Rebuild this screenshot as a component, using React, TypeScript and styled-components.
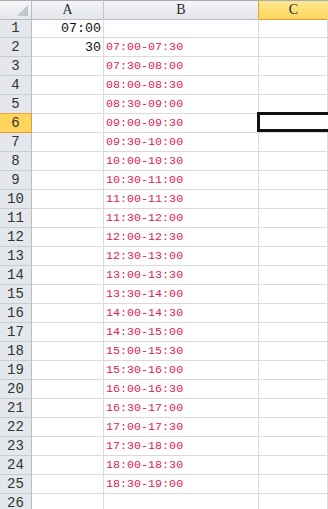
import styled, { createGlobalStyle, css } from "styled-components";

const GlobalStyle = createGlobalStyle`
  html, body {
    margin: 0;
    padding: 0;
    background: #ffffff;
    overflow: hidden;
  }
`;

// Styled components
const Sheet = styled.div`
  display: grid;
  grid-template-columns: 32px 72px 155px 1fr;
  grid-auto-rows: 19px;
  width: 328px;
  height: 509px;
  overflow: hidden;
  font-family: "Liberation Mono", "DejaVu Sans Mono", monospace;
`;

const Corner = styled.div`
  position: relative;
  height: 20px;
  box-sizing: border-box;
  border-top: 1px solid #a9acb1;
  border-right: 1px solid #b9bcc1;
  border-bottom: 1px solid #b9bcc1;
  background: linear-gradient(#f4f5f7, #e4e7eb);

  &::after {
    content: "";
    position: absolute;
    right: 3px;
    bottom: 3px;
    width: 0;
    height: 0;
    border-left: 11px solid transparent;
    border-bottom: 11px solid #c2c5ca;
  }
`;

const ColHeader = styled.div<{ $active?: boolean }>`
  height: 20px;
  box-sizing: border-box;
  display: flex;
  align-items: center;
  justify-content: center;
  border-top: 1px solid #a9acb1;
  border-right: 1px solid #c3c6cb;
  border-bottom: 1px solid #b9bcc1;
  background: linear-gradient(#f4f5f7, #e3e6ea);
  color: #2b2b2b;
  font-family: "Liberation Serif", "DejaVu Serif", serif;
  font-size: 14px;

  ${(p) =>
    p.$active &&
    css`
      margin-left: -1px;
      border-left: 1px solid #f0a33a;
      border-right: none;
      border-bottom: 1px solid #e49a36;
      background: linear-gradient(#fbe68e, #ffd75f);
    `}
`;

const RowHeader = styled.div<{ $active?: boolean }>`
  box-sizing: border-box;
  display: flex;
  align-items: center;
  justify-content: center;
  border-right: 1px solid #b9bcc1;
  border-bottom: 1px solid #c9ccd1;
  background: #e4e7eb;
  color: #333333;
  font-family: "Liberation Mono", "DejaVu Sans Mono", monospace;
  font-size: 14px;

  ${(p) =>
    p.$active &&
    css`
      margin-top: -1px;
      border-top: 1px solid #f0a33a;
      border-right: 1px solid #e49a36;
      border-bottom: 1px solid #e49a36;
      background: #ffd55e;
    `}
`;

const Cell = styled.div<{ $align?: "left" | "right"; $slot?: boolean }>`
  box-sizing: border-box;
  display: flex;
  align-items: center;
  justify-content: ${(p) => (p.$align === "right" ? "flex-end" : "flex-start")};
  padding: 0 2px;
  border-right: 1px solid #dadada;
  border-bottom: 1px solid #dadada;
  white-space: nowrap;
  color: ${(p) => (p.$slot ? "#de2158" : "#111111")};
  font-size: ${(p) => (p.$slot ? "11.7px" : "13.3px")};
`;

const SelectedCell = styled(Cell)`
  position: relative;
  border-right: none;

  &::after {
    content: "";
    position: absolute;
    top: -2px;
    left: -2px;
    right: -4px;
    bottom: 0;
    border: 3px solid #111111;
  }
`;

const pad = (n: number) => (n < 10 ? "0" + n : "" + n);
const fmt = (mins: number) => `${pad(Math.floor(mins / 60))}:${pad(mins % 60)}`;

export default function App() {
  const start = 7 * 60;
  const step = 30;
  const rows = Array.from({ length: 26 }, (_, i) => i + 1);

  return (
    <>
      <GlobalStyle />
      <Sheet>
        <Corner />
        <ColHeader>A</ColHeader>
        <ColHeader>B</ColHeader>
        <ColHeader $active>C</ColHeader>
        {rows.map((r) => {
          const slot =
            r >= 2 && r <= 25
              ? `${fmt(start + (r - 2) * step)}-${fmt(start + (r - 1) * step)}`
              : "";
          const a = r === 1 ? "07:00" : r === 2 ? "30" : "";
          return [
            <RowHeader key={`h${r}`} $active={r === 6}>
              {r}
            </RowHeader>,
            <Cell key={`a${r}`} $align="right">
              {a}
            </Cell>,
            <Cell key={`b${r}`} $slot>
              {slot}
            </Cell>,
            r === 6 ? <SelectedCell key={`c${r}`} /> : <Cell key={`c${r}`} />,
          ];
        })}
      </Sheet>
    </>
  );
}
